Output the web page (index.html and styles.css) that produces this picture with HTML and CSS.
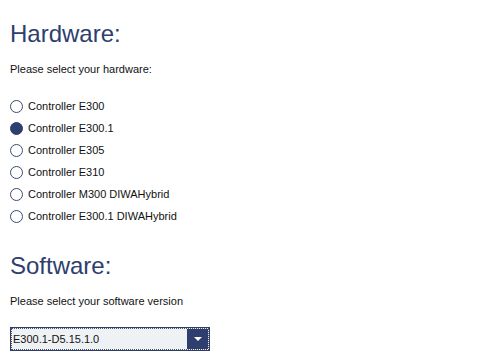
FILE: index.html
```html
<!DOCTYPE html>
<html>
<head>
<meta charset="utf-8">
<link rel="stylesheet" href="styles.css">
</head>
<body>
<div class="page">
  <h1 class="title">Hardware:</h1>
  <p class="hint">Please select your hardware:</p>
  <div class="radios">
    <label class="opt"><input type="radio" name="hw" class="radio"><span>Controller E300</span></label>
    <label class="opt"><input type="radio" name="hw" class="radio" checked><span>Controller E300.1</span></label>
    <label class="opt"><input type="radio" name="hw" class="radio"><span>Controller E305</span></label>
    <label class="opt"><input type="radio" name="hw" class="radio"><span>Controller E310</span></label>
    <label class="opt"><input type="radio" name="hw" class="radio"><span>Controller M300 DIWAHybrid</span></label>
    <label class="opt"><input type="radio" name="hw" class="radio"><span>Controller E300.1 DIWAHybrid</span></label>
  </div>
  <h1 class="title title-sw">Software:</h1>
  <p class="hint">Please select your software version</p>
  <div class="select">
    <div class="select-ring">
      <div class="select-value">E300.1-D5.15.1.0</div>
      <div class="select-btn"><span class="tri"></span></div>
    </div>
  </div>
</div>
</body>
</html>
```

FILE: styles.css
```css
html, body {
  margin: 0;
  padding: 0;
  background: #ffffff;
}
body {
  font-family: "Liberation Sans", Arial, sans-serif;
  color: #111;
}
.page {
  padding: 20px 10px 0 10px;
  display: flex;
  flex-direction: column;
  align-items: flex-start;
}
.title {
  margin: 0;
  font-size: 24px;
  line-height: 28px;
  font-weight: normal;
  color: #2e3e6e;
}
.title-sw {
  margin-top: 25px;
}
.hint {
  margin: 15px 0 0 0;
  font-size: 11px;
  line-height: 13px;
}
.radios {
  margin-top: 19px;
  display: flex;
  flex-direction: column;
}
.opt {
  height: 22px;
  display: flex;
  align-items: center;
  gap: 5px;
  font-size: 11px;
}
.radio {
  appearance: none;
  -webkit-appearance: none;
  margin: 0;
  width: 13px;
  height: 13px;
  border: 1px solid #3b4a72;
  border-radius: 50%;
  background: #fff;
  box-sizing: border-box;
}
.radio:checked {
  background: #2e3e6e;
  border-color: #2e3e6e;
}
.select {
  margin-top: 19px;
  width: 200px;
  height: 24px;
  box-sizing: border-box;
  border: 1px solid #2e3e6e;
  background: #eef2f4;
}
.select-ring {
  height: 100%;
  display: flex;
  box-sizing: border-box;
  border: 1px dotted #555;
}
.select-value {
  flex: 1;
  font-size: 11px;
  line-height: 20px;
  padding-left: 1px;
  color: #111;
}
.select-btn {
  width: 21px;
  background: #2e3e6e;
  display: flex;
  align-items: center;
  justify-content: center;
}
.tri {
  width: 0;
  height: 0;
  border-left: 4px solid transparent;
  border-right: 4px solid transparent;
  border-top: 4px solid #fff;
}
```
